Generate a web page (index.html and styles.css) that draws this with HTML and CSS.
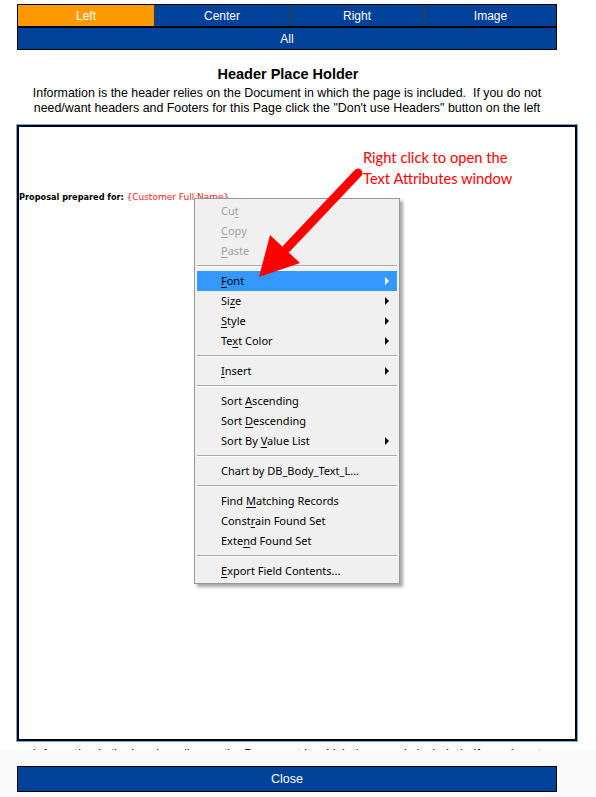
FILE: index.html
```html
<!DOCTYPE html>
<html>
<head>
<meta charset="utf-8">
<link rel="stylesheet" href="styles.css">
</head>
<body>
<div class="page">
  <div class="tabs">
    <div class="tab-row">
      <div class="tab active">Left</div>
      <div class="tab">Center</div>
      <div class="tab">Right</div>
      <div class="tab">Image</div>
    </div>
    <div class="tab-all">All</div>
  </div>

  <h1 class="title">Header Place Holder</h1>
  <p class="info">Information is the header relies on the Document in which the page is included.&nbsp; If you do not<br>need/want headers and Footers for this Page click the "Don't use Headers" button on the left</p>

  <div class="box">
    <div class="proposal"><b>Proposal prepared for:</b> <span class="field">{Customer Full Name}</span></div>

    <div class="menu">
      <div class="item disabled">Cu<u>t</u></div>
      <div class="item disabled"><u>C</u>opy</div>
      <div class="item disabled"><u>P</u>aste</div>
      <div class="sep"></div>
      <div class="item sub hover"><u>F</u>ont</div>
      <div class="item sub">Si<u>z</u>e</div>
      <div class="item sub"><u>S</u>tyle</div>
      <div class="item sub">Te<u>x</u>t Color</div>
      <div class="sep"></div>
      <div class="item sub"><u>I</u>nsert</div>
      <div class="sep"></div>
      <div class="item">Sort <u>A</u>scending</div>
      <div class="item">Sort <u>D</u>escending</div>
      <div class="item sub">Sort By <u>V</u>alue List</div>
      <div class="sep"></div>
      <div class="item">Chart by DB_Body_Text_L...</div>
      <div class="sep"></div>
      <div class="item">Find <u>M</u>atching Records</div>
      <div class="item">Const<u>r</u>ain Found Set</div>
      <div class="item">Exte<u>n</u>d Found Set</div>
      <div class="sep"></div>
      <div class="item"><u>E</u>xport Field Contents...</div>
    </div>

    <div class="note">Right click to open the<br>Text Attributes window</div>
    <svg class="arrow" width="556" height="612" viewBox="0 0 556 612">
      <line x1="339" y1="46" x2="268" y2="121" stroke="#ff0000" stroke-width="9" stroke-linecap="round"/>
      <polygon points="240,150 251,108 281,136" fill="#ff0000"/>
    </svg>
  </div>

  <div class="clipped"><span>Information is the header relies on the Document in which the page is included.&nbsp; If you do not</span></div>

  <div class="footer">
    <div class="close">Close</div>
  </div>
</div>
</body>
</html>
```

FILE: styles.css
```css
html, body {
  margin: 0;
  padding: 0;
  background: #ffffff;
}
body {
  font-family: "Liberation Sans", Arial, sans-serif;
  color: #000;
}
.page {
  width: 596px;
  height: 797px;
  overflow: hidden;
  display: flex;
  flex-direction: column;
}
.tabs {
  margin: 4px 0 0 17px;
  width: 538px;
  border: 1px solid #000;
  background: #00419a;
  color: #fff;
  font-size: 12px;
}
.tab-row {
  display: grid;
  grid-template-columns: 136px 135px 135px 1fr;
  height: 21px;
  border-bottom: 2px solid #000;
}
.tab {
  display: flex;
  align-items: center;
  justify-content: center;
  border-left: 1px solid #3a3a3a;
}
.tab:first-child { border-left: none; }
.tab.active { background: #ff9900; }
.tab-all {
  height: 21px;
  display: flex;
  align-items: center;
  justify-content: center;
}
.title {
  margin: 16px 0 0 0;
  font-size: 14.5px;
  line-height: 17px;
  font-weight: bold;
  text-align: center;
  padding-right: 20px;
}
.info {
  margin: 3px 0 0 0;
  font-size: 12.4px;
  line-height: 15px;
  text-align: center;
  padding-right: 22px;
}
.box {
  position: relative;
  margin: 9px 0 0 17px;
  width: 556px;
  height: 612px;
  border: 2px solid #000;
  box-shadow: 0 0 0 1px #6aaae8;
  background: #fff;
}
.proposal {
  margin: 64px 0 0 0;
  font-family: "DejaVu Sans", sans-serif;
  font-size: 8.2px;
  line-height: 12px;
  color: #000;
}
.proposal .field {
  color: #ff1a1a;
  font-size: 9px;
}
.menu {
  position: absolute;
  left: 175px;
  top: 71px;
  width: 202px;
  padding: 2px 1px;
  background: #f0f0f0;
  border: 1px solid #979797;
  box-shadow: 3px 3px 3px rgba(0,0,0,0.35);
  font-family: "Noto Sans", sans-serif;
  font-size: 11px;
  color: #000;
  z-index: 1;
}
.item {
  position: relative;
  height: 20px;
  line-height: 19px;
  padding-left: 24px;
  margin: 0 1px;
  white-space: nowrap;
}
.item u { text-underline-offset: 2px; }
.item.disabled { color: #a0a0a0; }
.item.hover { background: #3399ff; }
.item.sub::after {
  content: "";
  position: absolute;
  right: 8px;
  top: 6px;
  border-left: 4px solid #000;
  border-top: 4px solid transparent;
  border-bottom: 4px solid transparent;
}
.item.hover.sub::after { border-left-color: #fff; }
.sep {
  height: 10px;
  margin: 0 1px;
  background: linear-gradient(#f0f0f0 4px, #a8a8a8 4px, #a8a8a8 5px, #ffffff 5px, #ffffff 6px, #f0f0f0 6px);
}
.note {
  position: absolute;
  left: 344px;
  top: 20px;
  font-family: "Lato", sans-serif;
  font-size: 14.7px;
  line-height: 21px;
  color: #ff0000;
  z-index: 2;
}
.arrow {
  position: absolute;
  left: 0;
  top: 0;
  z-index: 3;
}
.clipped {
  margin-top: 5px;
  height: 4px;
  overflow: hidden;
  text-align: center;
  font-size: 12.4px;
  line-height: 15px;
  padding-right: 22px;
}
.clipped span {
  display: block;
  margin-top: 1px;
}
.footer {
  flex: 1;
  background: #fafafa;
  padding-top: 16px;
}
.close {
  margin-left: 17px;
  width: 538px;
  height: 24px;
  border: 1px solid #000;
  background: #00419a;
  color: #fff;
  font-size: 12.5px;
  display: flex;
  align-items: center;
  justify-content: center;
}
```
